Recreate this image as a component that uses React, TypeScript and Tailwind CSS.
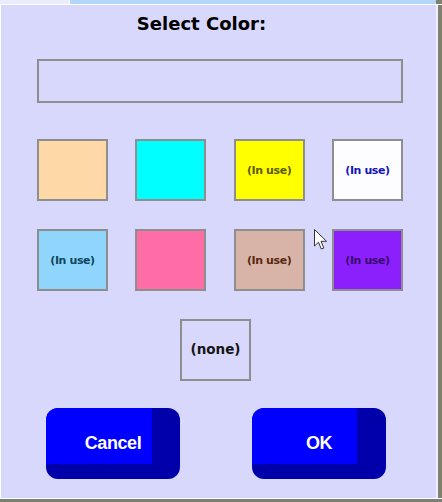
import React from "react";

type Sw = { bg: string; label?: string; fg?: string };

const row1: Sw[] = [
  { bg: "bg-[#ffd8a8]" },
  { bg: "bg-[#00ffff]" },
  { bg: "bg-[#ffff00]", label: "(In use)", fg: "text-[#5c5c00]" },
  { bg: "bg-[#fdfdff]", label: "(In use)", fg: "text-[#1414b8]" },
];
const row2: Sw[] = [
  { bg: "bg-[#90d6fc]", label: "(In use)", fg: "text-[#0e4660]" },
  { bg: "bg-[#ff6ca6]" },
  { bg: "bg-[#d8b4a8]", label: "(In use)", fg: "text-[#5a2810]" },
  { bg: "bg-[#8c20fc]", label: "(In use)", fg: "text-[#3a0a70]" },
];

function Swatch({ s }: { s: Sw }) {
  return (
    <div
      className={`w-[71px] h-[62px] border-2 border-[#8e8e8e] ${s.bg} flex items-center justify-center`}
    >
      {s.label && (
        <span
          className={`text-[11px] font-bold tracking-[-0.4px] leading-none ${s.fg}`}
          style={{ fontFamily: '"DejaVu Sans", Verdana, sans-serif' }}
        >
          {s.label}
        </span>
      )}
    </div>
  );
}

function Btn({ label, lightW }: { label: string; lightW: string }) {
  return (
    <div className="w-[134px] h-[71px] rounded-[12px] bg-[#0000aa] overflow-hidden grid">
      <div className={`[grid-area:1/1] ${lightW} h-[56px] bg-[#0000ff]`} />
      <div
        className="[grid-area:1/1] flex items-center justify-center text-white text-[18px] font-bold tracking-[-0.4px]"
        style={{ fontFamily: '"Liberation Sans", Arial, sans-serif' }}
      >
        {label}
      </div>
    </div>
  );
}

export default function App() {
  return (
    <div className="w-[442px] h-[502px] bg-[#d8d8fd] flex flex-col overflow-hidden relative">
      {/* top strip */}
      <div className="h-[4px] flex">
        <div className="w-[69px] bg-[#ececfe]" />
        <div className="w-[1px] bg-white" />
        <div className="flex-1 bg-[#b2d6fa]" />
        <div className="w-[6px] bg-[#808070]" />
      </div>
      <div className="h-[1px] bg-white" />
      <div className="flex-1 flex">
        <div className="w-[1px] bg-white" />
        <div className="flex-1 flex flex-col pl-[36px]">
          <div
            className="mt-[8px] h-[22px] leading-[22px] text-[18px] font-bold text-black text-center w-[366px] pr-[37px]"
            style={{ fontFamily: '"DejaVu Sans", Verdana, sans-serif' }}
          >
            Select Color:
          </div>
          <div className="mt-[24px] w-[366px] h-[44px] border-2 border-[#8e8e8e]" />
          <div className="mt-[36px] w-[366px] flex justify-between">
            {row1.map((s, i) => (
              <Swatch key={i} s={s} />
            ))}
          </div>
          <div className="mt-[28px] w-[366px] flex justify-between">
            {row2.map((s, i) => (
              <Swatch key={i} s={s} />
            ))}
          </div>
          <div className="mt-[28px] ml-[143px] w-[71px] h-[62px] border-2 border-[#8e8e8e] flex items-center justify-center">
            <span
              className="text-[13.5px] font-bold text-[#151515] leading-none"
              style={{ fontFamily: '"DejaVu Sans", Verdana, sans-serif' }}
            >
              (none)
            </span>
          </div>
          <div className="mt-[27px] ml-[9px] flex gap-[72px]">
            <Btn label="Cancel" lightW="w-[106px]" />
            <Btn label="OK" lightW="w-[105px]" />
          </div>
        </div>
        <div className="w-[2px] bg-[#eeeefe]" />
        <div className="w-[4px] bg-[#808070]" />
      </div>
      <div className="h-[1px] bg-white" />
      <div className="h-[3px] bg-[#7e7e78]" />

      {/* mouse cursor overlay */}
      <svg
        className="absolute left-[314px] top-[229px]"
        width="14"
        height="22"
        viewBox="0 0 14 22"
      >
        <path
          d="M0.5 0.5 L0.5 17 L4.5 13.2 L7.3 20 L9.8 19 L7 12.3 L12.5 12.3 Z"
          fill="white"
          stroke="#333"
          strokeWidth="1"
          strokeLinejoin="round"
        />
      </svg>
    </div>
  );
}
